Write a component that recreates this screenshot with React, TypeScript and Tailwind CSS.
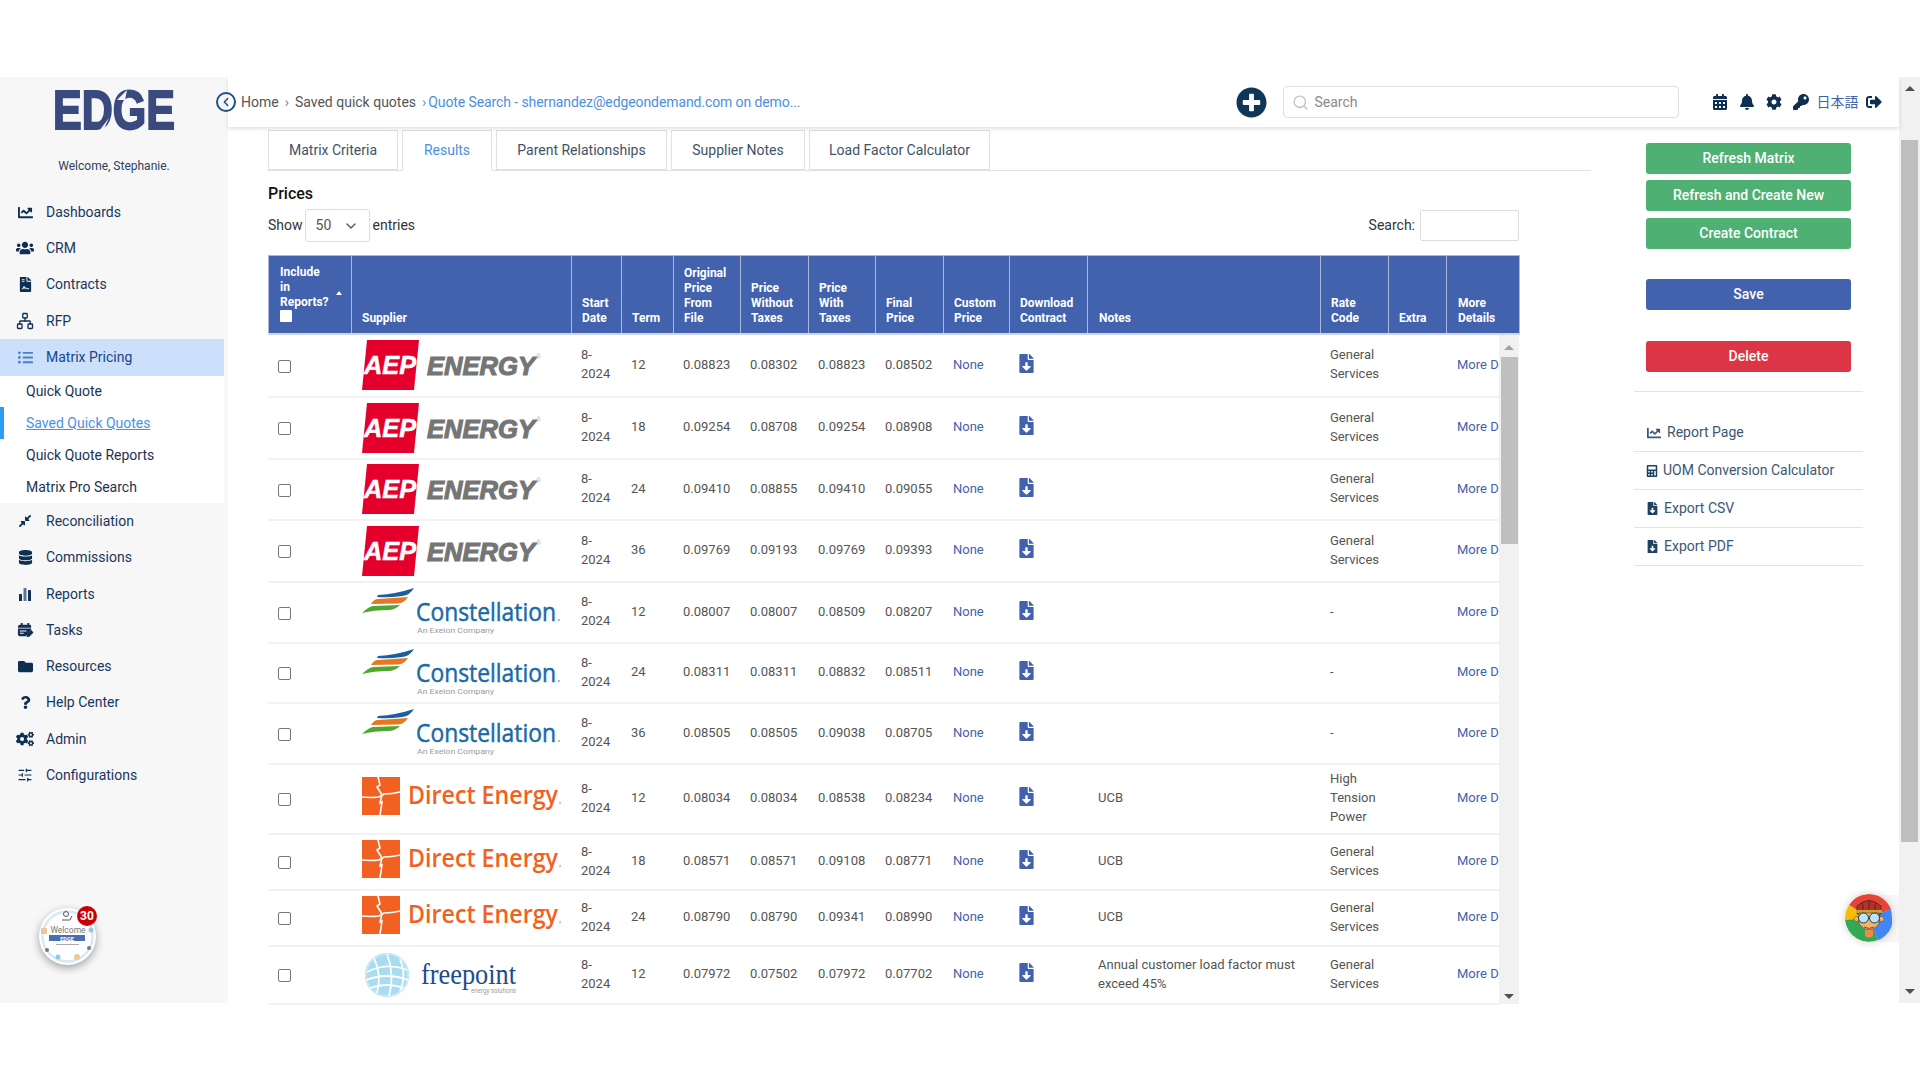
import {
  FaBell, FaCalculator, FaCalendarAlt, FaChartLine, FaCog, FaCogs, FaCompressAlt, FaDatabase,
  FaFileContract, FaFileDownload, FaFolder, FaKey, FaListUl, FaPlusCircle, FaQuestion, FaSignOutAlt, FaUsers,
} from 'react-icons/fa';
import { ChevronDown, ChevronLeft, Network, Search, SlidersHorizontal } from 'lucide-react';

const BarsIcon = () => (
  <svg viewBox="0 0 14 14" className="h-[14px] w-[14px]" fill="currentColor">
    <rect x="1" y="7" width="3" height="7" rx="0.5" />
    <rect x="5.500" y="1" width="3" height="13" rx="0.5" fill="#5c7796" />
    <rect x="10" y="3" width="3" height="11" rx="0.5" />
  </svg>
);

const TaskIcon = () => (
  <svg viewBox="0 0 18 18" className="h-[17px] w-[17px]" fill="currentColor">
    <path d="M1 5 Q1 3 3 3 L4 3 L4 1 L6 1 L6 3 L11 3 L11 1 L13 1 L13 3 L14 3 Q15 3 15 5 L15 6 L1 6 Z" />
    <path d="M1 7 L15 7 L15 8.500 L9 15 L3 15 Q1 15 1 13 Z" />
    <path d="M3 9.500 L10 9.500 M3 12 L7 12" stroke="#f7f7f7" strokeWidth="1.1" />
    <path d="M10 16 L10.500 13 L15 8.500 L17.500 11 L13 15.500 Z" />
  </svg>
);

const navIcon = 'flex w-[46px] justify-center pl-[4px] text-[#0f2f52]';

const navTop = [
  { label: 'Dashboards', icon: <FaChartLine size={15} />, row: 'h-[36px]' },
  { label: 'CRM', icon: <FaUsers size={18} />, row: 'h-[36px]' },
  { label: 'Contracts', icon: <FaFileContract size={15} />, row: 'h-[37px]' },
  { label: 'RFP', icon: <Network size={18} strokeWidth={1.75} />, row: 'h-[36px]' },
];

const navBottom = [
  { label: 'Reconciliation', icon: <FaCompressAlt size={14} />, row: 'h-[36px]' },
  { label: 'Commissions', icon: <FaDatabase size={15} />, row: 'h-[37px]' },
  { label: 'Reports', icon: <BarsIcon />, row: 'h-[36px]' },
  { label: 'Tasks', icon: <TaskIcon />, row: 'h-[36px]' },
  { label: 'Resources', icon: <FaFolder size={15} />, row: 'h-[36px]' },
  { label: 'Help Center', icon: <FaQuestion size={13} />, row: 'h-[37px]' },
  { label: 'Admin', icon: <FaCogs size={18} />, row: 'h-[36px]' },
  { label: 'Configurations', icon: <SlidersHorizontal size={16} strokeWidth={1.75} />, row: 'h-[36px]' },
];

const subNav = ['Quick Quote', 'Saved Quick Quotes', 'Quick Quote Reports', 'Matrix Pro Search'];
const tabs = [
  { label: 'Matrix Criteria', w: 'w-[130px]' },
  { label: 'Results', w: 'w-[90px]' },
  { label: 'Parent Relationships', w: 'w-[171px]' },
  { label: 'Supplier Notes', w: 'w-[134px]' },
  { label: 'Load Factor Calculator', w: 'w-[181px]' },
];

const headers = [
  ['Original', 'Price', 'From', 'File'],
  ['Price', 'Without', 'Taxes'],
  ['Price', 'With', 'Taxes'],
  ['Final', 'Price'],
  ['Custom', 'Price'],
  ['Download', 'Contract'],
];

const GS = 'General Services';
const rows = [
  { s: 'aep', h: 'h-[62px]', term: 12, p: ['0.08823', '0.08302', '0.08823', '0.08502'], note: '', rate: GS },
  { s: 'aep', h: 'h-[62px]', term: 18, p: ['0.09254', '0.08708', '0.09254', '0.08908'], note: '', rate: GS },
  { s: 'aep', h: 'h-[61px]', term: 24, p: ['0.09410', '0.08855', '0.09410', '0.09055'], note: '', rate: GS },
  { s: 'aep', h: 'h-[62px]', term: 36, p: ['0.09769', '0.09193', '0.09769', '0.09393'], note: '', rate: GS },
  { s: 'con', h: 'h-[61px]', term: 12, p: ['0.08007', '0.08007', '0.08509', '0.08207'], note: '', rate: '-' },
  { s: 'con', h: 'h-[60px]', term: 24, p: ['0.08311', '0.08311', '0.08832', '0.08511'], note: '', rate: '-' },
  { s: 'con', h: 'h-[61px]', term: 36, p: ['0.08505', '0.08505', '0.09038', '0.08705'], note: '', rate: '-' },
  { s: 'dir', h: 'h-[70px]', term: 12, p: ['0.08034', '0.08034', '0.08538', '0.08234'], note: 'UCB', rate: 'High Tension Power' },
  { s: 'dir', h: 'h-[56px]', term: 18, p: ['0.08571', '0.08571', '0.09108', '0.08771'], note: 'UCB', rate: GS },
  { s: 'dir', h: 'h-[56px]', term: 24, p: ['0.08790', '0.08790', '0.09341', '0.08990'], note: 'UCB', rate: GS },
  { s: 'fre', h: 'h-[58px]', term: 12, p: ['0.07972', '0.07502', '0.07972', '0.07702'], note: 'Annual customer load factor must exceed 45%', rate: GS },
];

const Cols = ({ last }: { last: string }) => (
  <colgroup>
    <col className="w-[83px]" />
    <col className="w-[220px]" />
    <col className="w-[50px]" />
    <col className="w-[52px]" />
    <col className="w-[67px]" />
    <col className="w-[68px]" />
    <col className="w-[67px]" />
    <col className="w-[68px]" />
    <col className="w-[66px]" />
    <col className="w-[78px]" />
    <col className="w-[233px]" />
    <col className="w-[68px]" />
    <col className="w-[58px]" />
    <col className={last} />
  </colgroup>
);

const AepLogo = () => (
  <svg viewBox="0 0 200 50" className="block w-[200px] h-[50px]">
    <polygon points="5,0 57,0 52,50 0,50" fill="#e4002b" />
    <text x="2" y="34" fontFamily="Liberation Sans" fontWeight="700" fontStyle="italic" fontSize="25" fill="#fff" stroke="#fff" strokeWidth="0.5" textLength="52" lengthAdjust="spacingAndGlyphs">AEP</text>
    <text x="65" y="35" fontFamily="Liberation Sans" fontWeight="700" fontStyle="italic" fontSize="26" fill="#757575" stroke="#757575" strokeWidth="1.1" textLength="108" lengthAdjust="spacingAndGlyphs">ENERGY</text>
    <text x="174" y="19" fontFamily="Liberation Sans" fontSize="7" fill="#bdbdbd">®</text>
  </svg>
);

const ConstellationLogo = () => (
  <svg viewBox="0 0 200 50" className="block w-[200px] h-[50px]">
    <path d="M16 8 Q34 7 52 1 Q48 8 40 9 Q26 11 15 10 Z" fill="#1b5f9e" />
    <path d="M9 17 Q12 12 16 12 L46 10 Q42 16 36 16.500 Z" fill="#e87722" />
    <path d="M0 26 Q6 20 11 19 L38 18 Q33 23 26 23 Q12 23 0 26 Z" fill="#4ea72e" />
    <text x="54" y="34" fontFamily="Open Sans" fontSize="26" fill="#1a6aa8" stroke="#1a6aa8" strokeWidth="0.5" textLength="140" lengthAdjust="spacingAndGlyphs">Constellation</text>
    <circle cx="197" cy="33" r="1.2" fill="#9cc3dc" />
    <text x="55" y="46" fontFamily="Roboto" fontSize="8" fill="#9a9a9a" textLength="77" lengthAdjust="spacingAndGlyphs">An Exelon Company</text>
  </svg>
);

const DirectLogo = () => (
  <svg viewBox="0 0 200 50" className="block w-[200px] h-[50px]">
    <rect x="0" y="3" width="38" height="38" fill="#f26122" />
    <path d="M0 23 Q8 24 17 23 L22 20 Q30 20 38 18" stroke="#fff" strokeWidth="1.6" fill="none" />
    <path d="M16 3 L18 11 L15 13 L20 21 L18 29 L20 28 L18 41" stroke="#fff" strokeWidth="1.6" fill="none" />
    <text x="46" y="30" fontFamily="Open Sans" fontSize="25" fontWeight="600" fill="#f26122" textLength="150" lengthAdjust="spacingAndGlyphs">Direct Energy</text>
    <circle cx="198" cy="29" r="1" fill="#f9a27e" />
  </svg>
);

const FreepointLogo = () => (
  <svg viewBox="0 0 200 50" className="block w-[200px] h-[50px]">
    <circle cx="25" cy="25" r="22" fill="#a9dcf0" />
    <circle cx="25" cy="25" r="21" fill="none" stroke="#c6e8f5" strokeWidth="2" />
    <path d="M5 22 Q25 12 45 20 M4 30 Q25 22 46 30 M8 38 Q25 32 42 38 M12 8 Q20 25 15 43 M25 4 Q33 25 27 46 M38 9 Q45 25 38 41" stroke="#fff" strokeWidth="1.8" fill="none" />
    <text x="59" y="34" fontFamily="Liberation Serif" fontSize="30" fill="#1c4c8f" textLength="95" lengthAdjust="spacingAndGlyphs">freepoint</text>
    <text x="109" y="43" fontFamily="Roboto" fontSize="6.5" fill="#9a9a9a" textLength="45" lengthAdjust="spacingAndGlyphs">energy solutions</text>
  </svg>
);

const logos: Record<string, React.ReactNode> = {
  aep: <AepLogo />,
  con: <ConstellationLogo />,
  dir: <DirectLogo />,
  fre: <FreepointLogo />,
};

const Sidebar = () => (
  <aside className="w-[228px] shrink-0 bg-[#f7f7f7] text-[14px] text-[#17365d]">
    <div className="flex justify-center pt-[13px]">
      <svg viewBox="0 0 122 40" className="h-[40px] w-[122px] overflow-visible">
        <text x="0" y="39" fontFamily="Liberation Sans" fontWeight="700" fontSize="55" fill="#3a4a7e" stroke="#3a4a7e" strokeWidth="2" textLength="122" lengthAdjust="spacingAndGlyphs">EDGE</text>
        <path d="M46 41 L56 28 L50 41 Z" fill="#f7f7f7" />
        <path d="M64 10 L74 0 L72 10 Z" fill="#f7f7f7" />
      </svg>
    </div>
    <p className="mt-[26px] text-center text-[12px] leading-[20px] text-[#2b4259]">Welcome, Stephanie.</p>
    <nav className="mt-[18px]">
      {navTop.map(n => (
        <div key={n.label} className={`flex items-center ${n.row}`}>
          <span className={navIcon}>{n.icon}</span>
          {n.label}
        </div>
      ))}
      <div className="flex h-[37px] w-[224px] items-center bg-[#cce0fb] text-[#17468a]">
        <span className="flex w-[46px] justify-center pl-[4px] text-[#4a7fd0]"><FaListUl size={15} /></span>
        Matrix Pricing
      </div>
      <div className="h-[127px] w-[224px] bg-white text-[#1c3350]">
        {subNav.map(s => (
          <div key={s} className={`relative flex items-center pl-[26px] ${s === 'Quick Quote' ? 'h-[31px]' : 'h-[32px]'}`}>
            {s === 'Saved Quick Quotes' && <span className="absolute left-0 top-0 h-[32px] w-[4px] bg-[#2a9df4]" />}
            <span className={s === 'Saved Quick Quotes' ? 'text-[#4a90e8] underline' : ''}>{s}</span>
          </div>
        ))}
      </div>
      {navBottom.map(n => (
        <div key={n.label} className={`flex items-center ${n.row}`}>
          <span className={navIcon}>{n.icon}</span>
          {n.label}
        </div>
      ))}
    </nav>
  </aside>
);

const TopBar = () => (
  <header className="relative z-10 flex h-[50px] items-center bg-white text-[14px] shadow-[0_2px_4px_rgba(0,0,0,0.12)]">
    <span className="-ml-[12px] flex h-[20px] w-[20px] items-center justify-center rounded-full border-2 border-[#1f4f86] text-[#1f4f86]">
      <ChevronLeft size={14} strokeWidth={2.5} />
    </span>
    <span className="ml-[5px] text-[#555]">Home</span>
    <span className="mx-[6px] text-[#888]">›</span>
    <span className="text-[#555]">Saved quick quotes</span>
    <span className="ml-[6px] mr-[2px] text-[#5a9be0]">›</span>
    <span className="tracking-[-0.1px] text-[#4a90e0]">Quote Search - shernandez@edgeondemand.com on demo...</span>
    <span className="ml-[436px] text-[#0f3557]"><FaPlusCircle size={31} /></span>
    <div className="ml-[16px] flex h-[32px] w-[396px] items-center rounded-[4px] border border-[#dedede] pl-[8px] text-[#8a8a8a]">
      <Search size={17} className="text-[#c4c4c4]" />
      <span className="ml-[5px]">Search</span>
    </div>
    <div className="ml-[33px] flex items-center text-[#0f2f52]">
      <span className="w-[27px]"><FaCalendarAlt size={16} /></span>
      <span className="w-[27px]"><FaBell size={16} /></span>
      <span className="w-[27px]"><FaCog size={16} /></span>
      <span className="w-[23px]"><FaKey size={16} /></span>
      <span className="w-[50px] font-['Roboto','Noto_Sans_CJK_JP',sans-serif] text-[#3f62ad]">日本語</span>
      <FaSignOutAlt size={16} />
    </div>
  </header>
);

const thClass = 'border border-[#a9b8da] pl-[10px] pb-[7px] text-left align-bottom font-bold';
const thWide = 'border border-[#a9b8da] pl-[11px] pb-[7px] text-left align-bottom font-bold';

const PriceTable = () => (
  <div className="w-[1251px]">
    <table className="w-[1250px] table-fixed border-b-2 border-[#cdd6ea] bg-[#4262ae] text-[12px] leading-[15px] font-bold text-white">
      <Cols last="w-[73px]" />
      <thead>
        <tr className="h-[78px]">
          <th className="relative border border-[#a9b8da] pl-[11px] pb-[11px] text-left align-bottom font-bold">
            Include<br />in<br />Reports?
            <input type="checkbox" className="block h-[12px] w-[12px] appearance-none rounded-[1px] bg-white" />
            <span className="absolute right-[9px] bottom-[38px] h-0 w-0 border-x-[3px] border-b-[4px] border-x-transparent border-b-white" />
          </th>
          <th className={thClass}>Supplier</th>
          <th className={thClass}>Start<br />Date</th>
          <th className={thClass}>Term</th>
          {headers.map(h => (
            <th key={h.join()} className={thClass}>
              {h.map(l => <div key={l}>{l}</div>)}
            </th>
          ))}
          <th className={thWide}>Notes</th>
          <th className={thClass}>Rate<br />Code</th>
          <th className={thClass}>Extra</th>
          <th className={thWide}>More<br />Details</th>
        </tr>
      </thead>
    </table>
    <div className="flex h-[669px]">
      <table className="h-fit w-[1230px] table-fixed text-[13px] leading-[19px] text-[#555]">
        <Cols last="w-[53px]" />
        <tbody>
          {rows.map((r, i) => (
            <tr key={i} className={`${r.h} border-b-2 border-[#f2f2f2]`}>
              <td className="pl-[10px]"><input type="checkbox" className="mt-[2px] block h-[13px] w-[13px] appearance-none rounded-[2px] border border-[#767676] bg-white" /></td>
              <td className="pl-[11px]">{logos[r.s]}</td>
              <td className="pb-[2px] pl-[10px] pr-[8px]">8-<br />2024</td>
              <td className="pb-[2px] pl-[10px]">{r.term}</td>
              {r.p.map((v, j) => <td key={j} className="pb-[2px] pl-[10px]">{v}</td>)}
              <td className="pb-[2px] pl-[10px] text-[#4262ae]">None</td>
              <td className="pb-[2px] pl-[8px] text-[#4262ae]"><FaFileDownload size={19} className="-mt-[2px]" /></td>
              <td className="pb-[2px] pl-[11px] pr-[11px]">{r.note}</td>
              <td className="pb-[2px] pl-[10px] pr-[8px]">{r.rate}</td>
              <td />
              <td className="overflow-hidden pb-[2px] pl-[11px] whitespace-nowrap text-[#4262ae]">More Details</td>
            </tr>
          ))}
        </tbody>
      </table>
      <div className="flex w-[21px] flex-col items-center bg-[#f1f1f1]">
        <span className="mt-[10px] h-0 w-0 border-x-[5px] border-b-[5px] border-x-transparent border-b-[#a3a3a3]" />
        <span className="mt-[7px] h-[187px] w-[17px] bg-[#bfbfbf]" />
        <span className="mt-auto mb-[5px] h-0 w-0 border-x-[5px] border-t-[5px] border-x-transparent border-t-[#505050]" />
      </div>
    </div>
  </div>
);

const SideActions = () => (
  <aside className="ml-[43px] w-[229px] shrink-0 pt-[13px] text-[14px]">
    <div className="flex flex-col items-center font-medium text-white">
      <button className="h-[31px] w-[205px] rounded-[3px] bg-[#4eb073]">Refresh Matrix</button>
      <button className="mt-[6px] h-[31px] w-[205px] rounded-[3px] bg-[#4eb073]">Refresh and Create New</button>
      <button className="mt-[7px] h-[31px] w-[205px] rounded-[3px] bg-[#4eb073]">Create Contract</button>
      <button className="mt-[30px] h-[31px] w-[205px] rounded-[3px] bg-[#4262ae]">Save</button>
      <button className="mt-[31px] h-[31px] w-[205px] rounded-[3px] bg-[#dc3545]">Delete</button>
    </div>
    <div className="mt-[19px] border-t border-[#e3e3e3] pt-[22px] text-[#3c5772]">
      <div className="flex h-[38px] items-center border-b border-[#e3e3e3] pl-[13px]"><FaChartLine size={14} className="mr-[6px] text-[#3c5772]" />Report Page</div>
      <div className="flex h-[38px] items-center border-b border-[#e3e3e3] pl-[12px]"><FaCalculator size={12} className="mr-[5px] text-[#1f4163]" />UOM Conversion Calculator</div>
      <div className="flex h-[38px] items-center border-b border-[#e3e3e3] pl-[12px]"><FaFileDownload size={13} className="mr-[5px] text-[#1f4163]" />Export CSV</div>
      <div className="flex h-[38px] items-center border-b border-[#e3e3e3] pl-[12px]"><FaFileDownload size={13} className="mr-[5px] text-[#1f4163]" />Export PDF</div>
    </div>
  </aside>
);

const WelcomeBadge = () => (
  <div className="absolute left-[39px] top-[831px] h-[57px] w-[57px] rounded-full bg-white shadow-[0_3px_8px_rgba(0,0,0,0.35)]">
    <svg viewBox="0 0 57 57" className="block h-[57px] w-[57px]">
      <circle cx="28.500" cy="28.500" r="25" fill="none" stroke="#d5e9f6" strokeWidth="2.5" />
      <text x="29" y="25" textAnchor="middle" fontFamily="Roboto" fontSize="8.500" fill="#777">Welcome</text>
      <rect x="10" y="27" width="36" height="6" fill="#4a6fb0" />
      <text x="28" y="32.500" textAnchor="middle" fontFamily="Roboto" fontWeight="700" fontSize="5.500" fill="#fff">EDGE</text>
      <path d="M17 36.500 L40 36.500" stroke="#a9a9a9" strokeWidth="1" />
      <circle cx="27" cy="6" r="2.500" fill="none" stroke="#555" />
      <path d="M23 12 L31 12 L33 8" stroke="#555" fill="none" />
      <rect x="2" y="20" width="6" height="6" fill="#eec49b" />
      <circle cx="38" cy="49" r="3" fill="#eec49b" />
      <circle cx="19" cy="49" r="2.500" fill="#8fc7ea" />
      <circle cx="52" cy="22" r="2.500" fill="#8fc7ea" />
      <circle cx="8" cy="42" r="2" fill="#777" />
      <circle cx="50" cy="40" r="2" fill="#777" />
    </svg>
    <span className="absolute -right-[1px] -top-[2px] flex h-[20px] w-[20px] items-center justify-center rounded-full bg-[#cc0000] text-[12px] font-bold text-white">30</span>
  </div>
);

const HelperAvatar = () => (
  <>
    <span className="absolute left-[1868px] top-[818px] h-[47px] w-[31px] bg-[#f7f7f7]" />
    <svg viewBox="0 0 48 48" className="absolute left-[1845px] top-[817px] h-[48px] w-[48px] rounded-full drop-shadow-[0_0_4px_rgba(0,0,0,0.2)]">
      <path d="M24 24 L24 0 A24 24 0 0 1 46 15 Z" fill="#ea4335" />
      <path d="M24 24 L24 0 A24 24 0 0 0 4 11 Z" fill="#ea4335" />
      <path d="M24 24 L4 11 A24 24 0 0 0 0 26 Z" fill="#fbbc05" />
      <path d="M24 24 L0 26 A24 24 0 0 0 33 46 Z" fill="#34a853" />
      <path d="M24 24 L46 15 Q48 28 47 46 L33 46 Z" fill="#4285f4" />
      <path d="M12 12 Q24 1 36 12 L36 20 L12 20 Z" fill="#b3322c" stroke="#333" strokeWidth="0.8" />
      <path d="M24 6 L24 19 M17 9 Q20 13 17 17 M31 9 Q28 13 31 17" stroke="#5c1a16" strokeWidth="0.8" fill="none" />
      <rect x="11" y="16" width="26" height="3" fill="#c9a23a" />
      <path d="M14 19 L34 19 L34 30 Q24 42 14 30 Z" fill="#f4b36f" stroke="#5b3a1e" strokeWidth="0.6" />
      <path d="M20 36 L28 36 L28 42 Q24 45 20 42 Z" fill="#f08a45" />
      <circle cx="11.500" cy="25" r="2.500" fill="#f4b36f" stroke="#5b3a1e" strokeWidth="0.5" />
      <circle cx="36.500" cy="25" r="2.500" fill="#f4b36f" stroke="#5b3a1e" strokeWidth="0.5" />
      <circle cx="18.500" cy="24" r="5" fill="#bfe4f7" stroke="#1f3e52" strokeWidth="1" />
      <circle cx="29.500" cy="24" r="5" fill="#bfe4f7" stroke="#1f3e52" strokeWidth="1" />
      <path d="M19 33 Q24 36 29 33" stroke="#5b3a1e" strokeWidth="0.8" fill="none" />
    </svg>
  </>
);

export default function App() {
  return (
    <div className="h-[1080px] w-[1920px] overflow-hidden bg-white font-['Roboto',sans-serif]">
      <div className="h-[77px]" />
      <div className="relative flex h-[926px]">
        <Sidebar />
        <div className="flex w-[1671px] shrink-0 flex-col">
          <TopBar />
          <div className="flex min-h-0 flex-1 pt-[3px]">
            <main className="ml-[40px] w-[1323px] shrink-0 text-[14px] text-[#333]">
              <div className="flex h-[41px] gap-[4px] border-b border-[#dee2e6]">
                {tabs.map(t => (
                  <div
                    key={t.label}
                    className={`flex ${t.w} items-center justify-center border border-[#dee2e6] ${t.label === 'Results' ? 'h-[41px] border-b-white text-[#4a90e0]' : 'text-[#3d5368]'}`}
                  >
                    {t.label}
                  </div>
                ))}
              </div>
              <h2 className="mt-[11px] text-[16px] leading-[24px] font-medium text-[#111]">Prices</h2>
              <div className="mt-[3px] flex h-[33px] w-[1251px] items-center">
                <span>Show</span>
                <div className="ml-[2px] flex h-[33px] w-[65px] items-center justify-between rounded-[3px] border border-[#ddd] pr-[10px] pl-[10px] text-[#555]">
                  50 <ChevronDown size={16} />
                </div>
                <span className="ml-[3px]">entries</span>
                <span className="ml-auto">Search:</span>
                <div className="ml-[5px] h-[31px] w-[99px] rounded-[2px] border border-[#ddd]" />
              </div>
              <div className="mt-[13px]"><PriceTable /></div>
            </main>
            <SideActions />
          </div>
        </div>
        <div className="flex w-[21px] shrink-0 flex-col items-center bg-[#f1f1f1]">
          <span className="mt-[9px] h-0 w-0 border-x-[5px] border-b-[5px] border-x-transparent border-b-[#505050]" />
          <span className="mt-[49px] h-[702px] w-[17px] bg-[#bfbfbf]" />
          <span className="mt-auto mb-[9px] h-0 w-0 border-x-[5px] border-t-[5px] border-x-transparent border-t-[#505050]" />
        </div>
        <WelcomeBadge />
        <HelperAvatar />
      </div>
    </div>
  );
}
